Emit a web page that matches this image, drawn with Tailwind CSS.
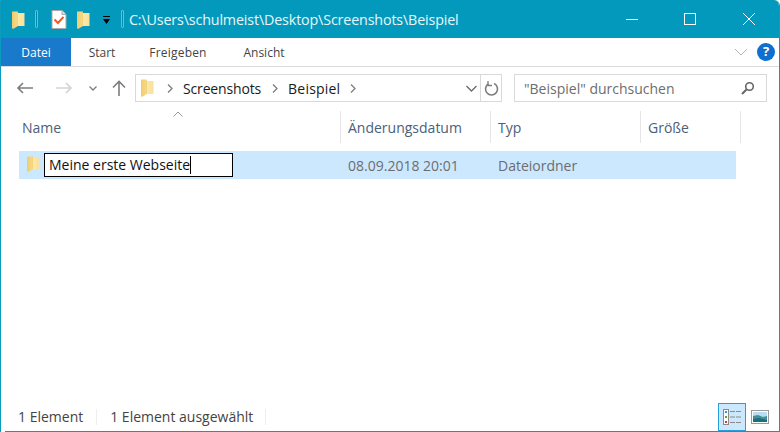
<!DOCTYPE html>
<html lang="de">
<head>
<meta charset="utf-8">
<script src="https://cdn.jsdelivr.net/npm/@tailwindcss/browser@4"></script>
</head>
<body class="w-[780px] h-[432px] overflow-hidden bg-white font-['Open_Sans','Noto_Sans',sans-serif]">
<svg class="absolute w-0 h-0"><defs>
<linearGradient id="f" x1="0" y1="0" x2="1" y2="0"><stop offset="0" stop-color="#f0cc6e"/><stop offset=".45" stop-color="#f7da86"/><stop offset=".5" stop-color="#fde8a8"/><stop offset="1" stop-color="#fae09a"/></linearGradient>
<symbol id="folder" viewBox="0 0 13 18"><path d="M0 .5H5.500L6 2H12.500V15H6L1 18L0 17Z" fill="url(#f)"/><path d="M5.500 .5V14.500" stroke="#f1cf78" stroke-width=".6"/></symbol>
</defs></svg>
<div class="relative flex flex-col h-[432px] w-[780px] border-l border-r border-[#0a9cbd] rounded-tr-[6px] overflow-hidden">
  <!-- title bar -->
  <div class="flex items-center h-[38px] bg-[#0399bc] shrink-0 pl-[11px] text-white">
    <svg class="w-[13px] h-[18px] mt-[1px]"><use href="#folder"/></svg>
    <div class="w-[3px] h-[18px] ml-[10px] bg-[#0a88a6] border border-[#5fc0d6] rounded-[1px]"></div>
    <svg class="w-[16px] h-[19px] ml-[13px]" viewBox="0 0 16 19"><path d="M1 .5H11L15 4.500V18.500H1Z" fill="#fff" stroke="#a9a9a9"/><path d="M11 .5V4.500H15" fill="#d8e0e4" stroke="#a9a9a9"/><path d="M3.500 9.500L7 13L12.500 6.800" fill="none" stroke="#ef5a26" stroke-width="2"/></svg>
    <svg class="w-[13px] h-[18px] ml-[10px] mt-[1px]"><use href="#folder"/></svg>
    <svg class="w-[9px] h-[9px] ml-[12px] mt-[3px]" viewBox="0 0 9 9"><path d="M1 0.500H8" stroke="#000" stroke-width="1"/><path d="M1 3L8 3L4.500 8Z" fill="#000"/></svg>
    <div class="w-[3px] h-[18px] ml-[10px] bg-[#0a88a6] border border-[#5fc0d6] rounded-[1px]"></div>
    <span class="ml-[5px] mt-[1px] text-[14.300px] leading-[20px] tracking-[-0.150px] text-[#e8f6fa]">C:\Users\schulmeist\Desktop\Screenshots\Beispiel</span>
    <div class="ml-auto flex items-center h-full mr-[23px]">
      <svg class="w-[14px] h-[14px]" viewBox="0 0 14 14"><path d="M1 7.500H13" stroke="#fff"/></svg>
      <svg class="w-[14px] h-[14px] ml-[44px]" viewBox="0 0 14 14"><rect x="1.500" y="1.500" width="11" height="11" fill="none" stroke="#fff"/></svg>
      <svg class="w-[14px] h-[14px] ml-[45px]" viewBox="0 0 14 14"><path d="M1 1L13 13M13 1L1 13" stroke="#fff"/></svg>
    </div>
  </div>
  <!-- ribbon -->
  <div class="flex items-stretch h-[29px] shrink-0 border-b border-[#dadada] text-[12px] text-[#444]">
    <div class="w-[70px] h-[28px] flex items-center justify-center bg-[#1979ca] text-white pt-[1px]">Datei</div>
    <div class="w-[62px] flex items-center justify-center pt-[1px]">Start</div>
    <div class="w-[90px] flex items-center justify-center pt-[1px] tracking-[0.2px]">Freigeben</div>
    <div class="w-[80px] flex items-center justify-center ml-[1px] pt-[1px]">Ansicht</div>
    <div class="ml-auto flex items-center pr-[4px]">
      <svg class="w-[14px] h-[8px] mr-[9px]" viewBox="0 0 14 8"><path d="M1 1L7 7L13 1" fill="none" stroke="#b5b5b5"/></svg>
      <div class="w-[18px] h-[18px] rounded-full bg-[#0f6fd0] text-white text-[13px] font-bold flex items-center justify-center">?</div>
    </div>
  </div>
  <!-- address row -->
  <div class="flex items-center h-[42px] shrink-0 pl-[15px]">
    <svg class="w-[18px] h-[12px]" viewBox="0 0 18 12"><path d="M17 6H2M7 1L2 6L7 11" fill="none" stroke="#7d7d7d" stroke-width="1.600"/></svg>
    <svg class="w-[18px] h-[12px] ml-[21px]" viewBox="0 0 18 12"><path d="M1 6H16M11 1L16 6L11 11" fill="none" stroke="#d3d3d3" stroke-width="1.600"/></svg>
    <svg class="w-[8px] h-[5px] ml-[16px]" viewBox="0 0 8 5"><path d="M.5 .5L4 4L7.500 .5" fill="none" stroke="#7d7d7d" stroke-width="1.300"/></svg>
    <svg class="w-[14px] h-[16px] ml-[15px]" viewBox="0 0 14 16"><path d="M7 16V1.500M1 7.500L7 1.500L13 7.500" fill="none" stroke="#7d7d7d" stroke-width="1.600"/></svg>
    <div class="flex items-center w-[367px] h-[28px] ml-[9px] border border-[#d9d9d9] text-[14px] text-[#1a1a1a]">
      <svg class="w-[13px] h-[18px] ml-[5px]"><use href="#folder"/></svg>
      <svg class="w-[6px] h-[9px] ml-[13px]" viewBox="0 0 6 9"><path d="M1 .5L5 4.500L1 8.500" fill="none" stroke="#7d7d7d" stroke-width="1.300"/></svg>
      <span class="ml-[10px] tracking-[-0.15px]">Screenshots</span>
      <svg class="w-[6px] h-[9px] ml-[11px]" viewBox="0 0 6 9"><path d="M1 .5L5 4.500L1 8.500" fill="none" stroke="#7d7d7d" stroke-width="1.300"/></svg>
      <span class="ml-[10px] tracking-[0.2px]">Beispiel</span>
      <svg class="w-[6px] h-[9px] ml-[10px]" viewBox="0 0 6 9"><path d="M1 .5L5 4.500L1 8.500" fill="none" stroke="#7d7d7d" stroke-width="1.300"/></svg>
      <svg class="w-[11px] h-[7px] ml-auto mr-[3px]" viewBox="0 0 11 7"><path d="M.5 1L5.500 6L10.500 1" fill="none" stroke="#6a6a6a" stroke-width="1.300"/></svg>
      <div class="w-[21px] h-full border-l border-[#d9d9d9] flex items-center justify-center">
        <svg class="w-[15px] h-[15px]" viewBox="0 0 15 15"><path d="M4.500 2.800A6 6 0 1 0 10 2.500" fill="none" stroke="#7d7d7d" stroke-width="1.600"/><path d="M4 0V4.500H8" fill="none" stroke="#7d7d7d" stroke-width="1.300"/></svg>
      </div>
    </div>
    <div class="flex items-center w-[253px] h-[28px] ml-[12px] border border-[#d9d9d9] pl-[9px] pr-[11px] text-[14px] text-[#6d6d6d]">
      <span>"Beispiel" durchsuchen</span>
      <svg class="w-[14px] h-[14px] ml-auto" viewBox="0 0 14 14"><circle cx="8.500" cy="5.500" r="3.800" fill="none" stroke="#666" stroke-width="1.600"/><path d="M5.500 8.500L1 13" stroke="#666" stroke-width="2"/></svg>
    </div>
  </div>
  <!-- column headers -->
  <div class="relative flex h-[32px] mt-[2px] shrink-0 text-[14px] text-[#4c607a]">
    <div class="w-[322px] ml-[18px] pl-[3px] mr-0 flex items-center border-r border-[#e5e5e5]">Name</div>
    <div class="w-[150px] pl-[7px] flex items-center border-r border-[#e5e5e5]">Änderungsdatum</div>
    <div class="w-[150px] pl-[7px] flex items-center border-r border-[#e5e5e5]">Typ</div>
    <div class="w-[100px] pl-[7px] flex items-center border-r border-[#e5e5e5]">Größe</div>
    <svg class="absolute left-[172px] top-0 w-[10px] h-[6px]" viewBox="0 0 10 6"><path d="M.5 5.500L5 1L9.500 5.500" fill="none" stroke="#9a9a9a"/></svg>
  </div>
  <!-- row -->
  <div class="flex items-center ml-[18px] w-[717px] h-[28px] mt-[8px] bg-[#cce8ff] shrink-0 text-[14px] text-[#6d6d6d]">
    <svg class="w-[13px] h-[16px] ml-[8px] mr-[4px] -mt-[2px]" viewBox="0 0 13 18" preserveAspectRatio="none"><use href="#folder"/></svg>
    <div class="w-[189px] h-[24px] border border-black bg-white pl-[4px] flex items-center text-[#111]"><span class="border-r border-black leading-[18px]">Meine erste Webseite</span></div>
    <span class="ml-[115px] w-[150px]">08.09.2018 20:01</span>
    <span>Dateiordner</span>
  </div>
  <div class="flex-1"></div>
  <!-- status bar -->
  <div class="flex items-center h-[28px] shrink-0 text-[14px] text-[#444] relative">
    <span class="ml-[17px] -mt-[2px]">1 Element</span>
    <div class="w-px h-[16px] bg-[#efefef] ml-[13px]"></div>
    <span class="ml-[13px] -mt-[2px]">1 Element ausgewählt</span>
    <div class="w-px h-[16px] bg-[#efefef] ml-[12px]"></div>
    <div class="ml-auto mr-[5px] flex items-center">
      <div class="w-[28px] h-[28px] bg-[#cce8ff] border border-[#26a0da] flex items-center justify-center">
        <svg class="w-[18px] h-[16px]" viewBox="0 0 18 16"><rect x=".5" y=".5" width="5" height="15" fill="#fff" stroke="#8a8a8a"/><rect x="2" y="2" width="2" height="2" fill="#3b8de0"/><rect x="2" y="7" width="2" height="2" fill="#6e9a3a"/><rect x="2" y="12" width="2" height="2" fill="#d83a2a"/><path d="M7 2.500H12M13 2.500H18M7 8H12M13 8H18M7 13.500H12M13 13.500H18" stroke="#8a8a8a"/></svg>
      </div>
      <svg class="w-[18px] h-[14px] ml-[5px] mr-[5px]" viewBox="0 0 18 14"><rect x=".5" y=".5" width="17" height="13" fill="#fff" stroke="#9a9a9a"/><rect x="2" y="2" width="14" height="10" fill="#b9dcf0"/><path d="M2 6L7 5L12 7L16 6V12H2Z" fill="#3f8f9c"/><path d="M2 9L8 8L16 10V12H2Z" fill="#1f6f7a"/></svg>
    </div>
  </div>
  <div class="h-[1px] bg-[#0a9cbd] ml-[4px] shrink-0"></div>
</div>
</body>
</html>
